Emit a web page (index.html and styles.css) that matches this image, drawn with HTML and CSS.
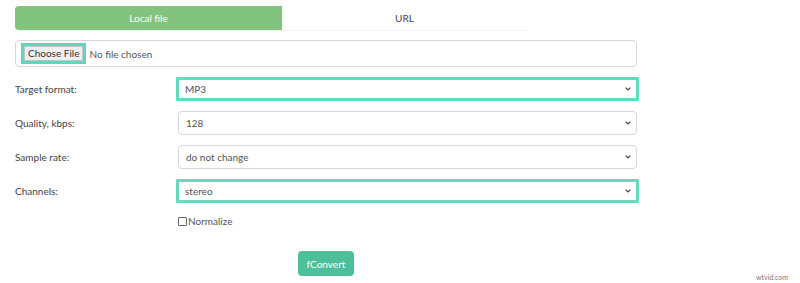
FILE: index.html
```html
<!DOCTYPE html>
<html lang="en">
<head>
    <meta charset="UTF-8">
    <meta name="viewport" content="width=device-width, initial-scale=1.0">
    <title>Audio converter</title>
    <link rel="stylesheet" href="styles.css">
</head>
<body>

<div class="converter">
    <div class="tabs">
        <div class="tab active">Local file</div>
        <div class="tab">URL</div>
    </div>

    <div class="file-box">
        <span class="file-button"><span class="file-button-inner">Choose File</span></span>
        <span class="file-name">No file chosen</span>
    </div>

    <div class="form-row">
        <label>Target format:</label>
        <div class="select highlight"><span>MP3</span><svg class="arrow" viewBox="0 0 6 4"><path d="M0.6 0.6 L3 3 L5.4 0.6" /></svg></div>
    </div>

    <div class="form-row">
        <label>Quality, kbps:</label>
        <div class="select"><span>128</span><svg class="arrow" viewBox="0 0 6 4"><path d="M0.6 0.6 L3 3 L5.4 0.6" /></svg></div>
    </div>

    <div class="form-row">
        <label>Sample rate:</label>
        <div class="select"><span>do not change</span><svg class="arrow" viewBox="0 0 6 4"><path d="M0.6 0.6 L3 3 L5.4 0.6" /></svg></div>
    </div>

    <div class="form-row">
        <label>Channels:</label>
        <div class="select highlight"><span>stereo</span><svg class="arrow" viewBox="0 0 6 4"><path d="M0.6 0.6 L3 3 L5.4 0.6" /></svg></div>
    </div>

    <div class="form-row">
        <span></span>
        <label class="check"><span class="box"></span>Normalize</label>
    </div>

    <div class="actions">
        <button class="convert">fConvert</button>
    </div>
</div>

<div class="watermark">wtvid.com</div>

</body>
</html>
```

FILE: styles.css
```css
body {
    font-family: 'Lato', 'Liberation Sans', sans-serif;
    margin: 0;
    padding: 0;
    background-color: #ffffff;
    color: #444;
    font-size: 10px;
}
.converter {
    width: 622px;
    padding: 6px 0 0 15px;
}
.tabs {
    display: flex;
    width: 512px;
    border-bottom: 1px solid #f3f3f3;
}
.tab {
    flex: 1;
    height: 24px;
    line-height: 24px;
    text-align: center;
    color: #444;
}
.tab.active {
    flex: 0 0 267px;
    background-color: #82c47e;
    color: #ffffff;
    border-radius: 4px 0 0 4px;
}
.file-box {
    margin-top: 9px;
    height: 25px;
    border: 1px solid #d6d6d6;
    border-radius: 4px;
    display: flex;
    align-items: center;
    padding-left: 5px;
}
.file-button {
    border: 3px solid #5fd6bd;
    height: 15px;
    display: flex;
}
.file-button-inner {
    background-color: #efefef;
    border: 1px solid #c4c4c4;
    padding: 0 3px;
    line-height: 13px;
    color: #333;
}
.file-name {
    margin-left: 3px;
    color: #555;
}
.form-row {
    display: grid;
    grid-template-columns: 163px 1fr;
    align-items: center;
    margin-top: 10px;
}
.form-row:first-of-type {
    margin-top: 12px;
}
.form-row label {
    color: #444;
}
.select {
    height: 22px;
    border: 1px solid #d6d6d6;
    border-radius: 4px;
    display: flex;
    align-items: center;
    justify-content: space-between;
    padding: 0 5px 0 7px;
    color: #555;
}
.select.highlight {
    border: 3px solid #62dbbf;
    border-radius: 1px;
    margin-left: -2px;
    margin-right: -2px;
    height: 18px;
    padding-left: 6px;
}
.arrow {
    width: 6px;
    height: 4px;
    fill: none;
    stroke: #444;
    stroke-width: 1.2;
}
.form-row .check {
    display: flex;
    align-items: center;
    color: #555;
    margin-top: 2px;
}
.box {
    width: 7px;
    height: 7px;
    border: 1px solid #666;
    border-radius: 1px;
    margin-right: 1px;
}
.actions {
    padding-left: 283px;
    margin-top: 24px;
}
.convert {
    background-color: #4dbf9a;
    color: #ffffff;
    border: none;
    border-radius: 4px;
    height: 25px;
    width: 56px;
    font-family: 'Lato', 'Liberation Sans', sans-serif;
    font-size: 10px;
    padding: 0;
}
.watermark {
    position: absolute;
    right: 12px;
    top: 273px;
    font-size: 7px;
    color: #777;
}
```
